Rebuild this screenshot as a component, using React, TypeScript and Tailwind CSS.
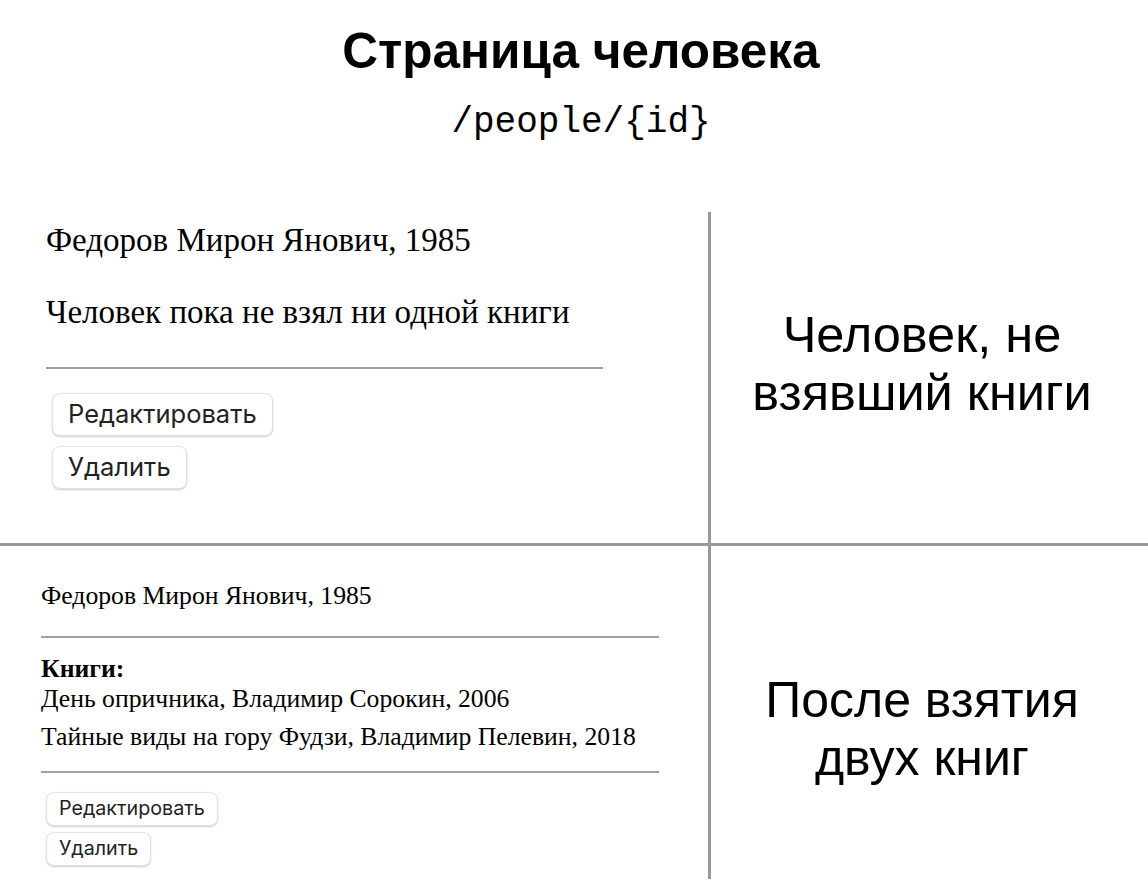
export default function App() {
  const serif = { fontFamily: '"Liberation Serif", "Times New Roman", serif' };
  return (
    <div className="min-h-screen w-[1148px] bg-white text-black">
      {/* Header */}
      <div className="flex flex-col items-center pl-[14px] pt-[21px]">
        <h1 className="font-['Liberation_Sans',Arial,sans-serif] text-[49.5px] font-bold leading-[1.2]">
          Страница человека
        </h1>
        <div className="mt-[21px] font-['Liberation_Mono','Courier_New',monospace] text-[36px] leading-[1.2]">
          /people/{"{id}"}
        </div>
      </div>

      {/* Grid */}
      <div className="mt-[67px] grid grid-cols-[708px_3px_1fr] grid-rows-[331px_3px_333px]">
        {/* Top left */}
        <div className="pl-[46px] pt-[9px]" style={serif}>
          <p className="text-[33px] leading-[1.2]">Федоров Мирон Янович, 1985</p>
          <p className="mt-[33px] text-[33px] leading-[1.2]">Человек пока не взял ни одной книги</p>
          <hr className="mt-[34px] w-[557px] border-0 border-t-2 border-[#a0a0a0]" />
          <div className="mt-[24px] ml-[6px] flex flex-col items-start gap-[10px] font-['Inter',sans-serif] text-[25.5px]">
            <Button big>Редактировать</Button>
            <Button big>Удалить</Button>
          </div>
        </div>
        <div className="bg-[#999999]" />
        {/* Top right */}
        <div className="pr-[15px] pt-[94px] text-center font-['Liberation_Sans',Arial,sans-serif] text-[50.5px] leading-[58px]">
          Человек, не
          <br />
          взявший книги
        </div>

        {/* Horizontal divider */}
        <div className="col-span-3 bg-[#999999]" />

        {/* Bottom left */}
        <div className="pl-[41px] pt-[35px]" style={serif}>
          <p className="text-[25.7px] leading-[30px]">Федоров Мирон Янович, 1985</p>
          <hr className="mt-[25px] w-[618px] border-0 border-t-2 border-[#a0a0a0]" />
          <div className="mt-[16px] text-[25.7px] leading-[30px]">
            <p className="font-bold">Книги:</p>
            <p>День опричника, Владимир Сорокин, 2006</p>
            <p className="mt-[8px]">Тайные виды на гору Фудзи, Владимир Пелевин, 2018</p>
          </div>
          <hr className="mt-[19px] w-[618px] border-0 border-t-2 border-[#a0a0a0]" />
          <div className="mt-[19px] ml-[5px] flex flex-col items-start gap-[6px] font-['Inter',sans-serif] text-[19.7px]">
            <Button>Редактировать</Button>
            <Button>Удалить</Button>
          </div>
        </div>
        <div className="bg-[#999999]" />
        {/* Bottom right */}
        <div className="pr-[15px] pt-[125px] text-center font-['Liberation_Sans',Arial,sans-serif] text-[50px] leading-[58px]">
          После взятия
          <br />
          двух книг
        </div>
      </div>
    </div>
  );
}

function Button({ children, big }: { children: React.ReactNode; big?: boolean }) {
  return (
    <button
      className={`rounded-[8px] border border-[#e2e2e2] bg-white text-[#222] shadow-[0_1px_2px_rgba(0,0,0,0.2)] ${
        big ? "h-[43px] px-[15px]" : "h-[34px] px-[12px]"
      }`}
    >
      {children}
    </button>
  );
}
